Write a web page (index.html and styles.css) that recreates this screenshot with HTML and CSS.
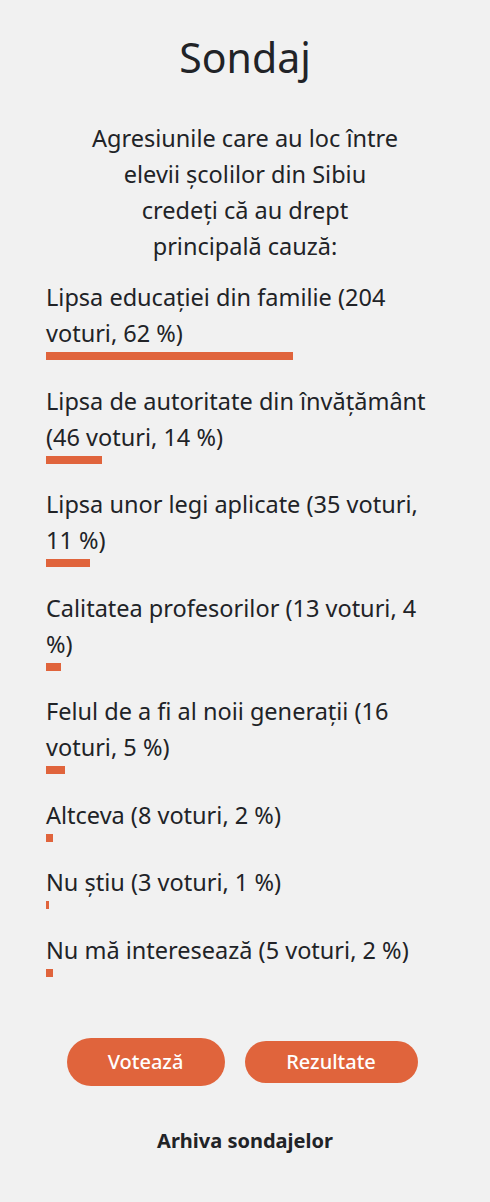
FILE: index.html
```html
<!DOCTYPE html>
<html lang="ro">
<head>
<meta charset="utf-8">
<title>Sondaj</title>
<link rel="stylesheet" href="styles.css">
</head>
<body>
<section class="poll">
  <h2 class="poll-title">Sondaj</h2>
  <p class="poll-question">Agresiunile care au loc între elevii școlilor din Sibiu credeți că au drept principală cauză:</p>

  <ul class="poll-results">
    <li class="poll-item">
      <span class="poll-label">Lipsa educației din familie (204 voturi, 62 %)</span>
      <span class="poll-bar" style="width: 62%"></span>
    </li>
    <li class="poll-item">
      <span class="poll-label">Lipsa de autoritate din învățământ (46 voturi, 14 %)</span>
      <span class="poll-bar" style="width: 14%"></span>
    </li>
    <li class="poll-item">
      <span class="poll-label">Lipsa unor legi aplicate (35 voturi, 11 %)</span>
      <span class="poll-bar" style="width: 11%"></span>
    </li>
    <li class="poll-item">
      <span class="poll-label">Calitatea profesorilor (13 voturi, 4 %)</span>
      <span class="poll-bar" style="width: 3.8%"></span>
    </li>
    <li class="poll-item">
      <span class="poll-label">Felul de a fi al noii generații (16 voturi, 5 %)</span>
      <span class="poll-bar" style="width: 4.8%"></span>
    </li>
    <li class="poll-item">
      <span class="poll-label">Altceva (8 voturi, 2 %)</span>
      <span class="poll-bar" style="width: 1.8%"></span>
    </li>
    <li class="poll-item">
      <span class="poll-label">Nu știu (3 voturi, 1 %)</span>
      <span class="poll-bar" style="width: 0.8%"></span>
    </li>
    <li class="poll-item">
      <span class="poll-label">Nu mă interesează (5 voturi, 2 %)</span>
      <span class="poll-bar" style="width: 1.8%"></span>
    </li>
  </ul>

  <div class="poll-actions">
    <button class="btn btn-vote" type="button">Votează</button>
    <button class="btn btn-results" type="button">Rezultate</button>
  </div>

  <a class="poll-archive" href="#">Arhiva sondajelor</a>
</section>
</body>
</html>
```

FILE: styles.css
```css
html, body {
  margin: 0;
  padding: 0;
  background: #f1f1f1;
}

body {
  font-family: "Noto Sans", "Open Sans", sans-serif;
  color: #212327;
}

.poll {
  display: flex;
  flex-direction: column;
  padding: 29px 46px 0;
}

.poll-title {
  margin: 0;
  text-align: center;
  font-size: 41px;
  font-weight: 400;
  line-height: 56px;
}

.poll-question {
  align-self: center;
  width: 308px;
  margin: 35px 0 0;
  text-align: center;
  font-size: 23.5px;
  line-height: 36px;
}

.poll-results {
  list-style: none;
  margin: 15px 0 0;
  padding: 0;
  display: flex;
  flex-direction: column;
  gap: 22.5px;
}

.poll-item {
  display: flex;
  flex-direction: column;
  align-items: flex-start;
}

.poll-label {
  font-size: 23.5px;
  line-height: 36px;
}

.poll-bar {
  display: block;
  height: 8px;
  margin-top: 1px;
  background: #e0643c;
}

.poll-actions {
  display: flex;
  justify-content: center;
  align-items: center;
  gap: 20px;
  margin-top: 61px;
  padding-right: 6px;
}

.btn {
  border: 0;
  border-radius: 999px;
  background: #e0643c;
  color: #fff;
  font-family: inherit;
  font-size: 20px;
  font-weight: 500;
  line-height: 24px;
  cursor: pointer;
}

.btn-vote {
  width: 158px;
  height: 48px;
}

.btn-results {
  width: 173px;
  height: 42px;
}

.poll-archive {
  align-self: center;
  margin-top: 41px;
  font-size: 20px;
  font-weight: 700;
  line-height: 28px;
  color: #212327;
  text-decoration: none;
}
```
